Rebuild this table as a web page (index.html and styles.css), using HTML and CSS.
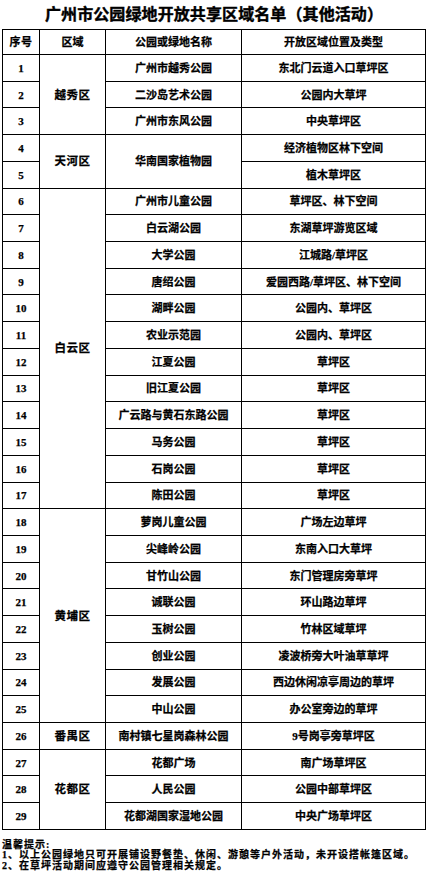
FILE: index.html
```html
<!DOCTYPE html>
<html lang="zh-CN">
<head>
<meta charset="utf-8">
<title>广州市公园绿地开放共享区域名单（其他活动）</title>
<link rel="stylesheet" href="styles.css">
</head>
<body>
<div class="page">
  <h1 class="title">广州市公园绿地开放共享区域名单（其他活动）</h1>
  <table class="list">
    <colgroup>
      <col class="c-no"><col class="c-area"><col class="c-park"><col class="c-zone">
    </colgroup>
    <thead>
      <tr class="head"><th>序号</th><th>区域</th><th>公园或绿地名称</th><th>开放区域位置及类型</th></tr>
    </thead>
    <tbody>
      <tr><td class="no">1</td><td class="area" rowspan="3">越秀区</td><td>广州市越秀公园</td><td>东北门云道入口草坪区</td></tr>
      <tr><td class="no">2</td><td>二沙岛艺术公园</td><td>公园内大草坪</td></tr>
      <tr><td class="no">3</td><td>广州市东风公园</td><td>中央草坪区</td></tr>
      <tr><td class="no">4</td><td class="area" rowspan="2">天河区</td><td rowspan="2">华南国家植物园</td><td>经济植物区林下空间</td></tr>
      <tr><td class="no">5</td><td>植木草坪区</td></tr>
      <tr><td class="no">6</td><td class="area" rowspan="12">白云区</td><td>广州市儿童公园</td><td>草坪区、林下空间</td></tr>
      <tr><td class="no">7</td><td>白云湖公园</td><td>东湖草坪游览区域</td></tr>
      <tr><td class="no">8</td><td>大学公园</td><td>江城路/草坪区</td></tr>
      <tr><td class="no">9</td><td>唐绍公园</td><td>爱园西路/草坪区、林下空间</td></tr>
      <tr><td class="no">10</td><td>湖畔公园</td><td>公园内、草坪区</td></tr>
      <tr><td class="no">11</td><td>农业示范园</td><td>公园内、草坪区</td></tr>
      <tr><td class="no">12</td><td>江夏公园</td><td>草坪区</td></tr>
      <tr><td class="no">13</td><td>旧江夏公园</td><td>草坪区</td></tr>
      <tr><td class="no">14</td><td>广云路与黄石东路公园</td><td>草坪区</td></tr>
      <tr><td class="no">15</td><td>马务公园</td><td>草坪区</td></tr>
      <tr><td class="no">16</td><td>石岗公园</td><td>草坪区</td></tr>
      <tr><td class="no">17</td><td>陈田公园</td><td>草坪区</td></tr>
      <tr><td class="no">18</td><td class="area" rowspan="8">黄埔区</td><td>萝岗儿童公园</td><td>广场左边草坪</td></tr>
      <tr><td class="no">19</td><td>尖峰岭公园</td><td>东南入口大草坪</td></tr>
      <tr><td class="no">20</td><td>甘竹山公园</td><td>东门管理房旁草坪</td></tr>
      <tr><td class="no">21</td><td>诚联公园</td><td>环山路边草坪</td></tr>
      <tr><td class="no">22</td><td>玉树公园</td><td>竹林区域草坪</td></tr>
      <tr><td class="no">23</td><td>创业公园</td><td>凌波桥旁大叶油草草坪</td></tr>
      <tr><td class="no">24</td><td>发展公园</td><td>西边休闲凉亭周边的草坪</td></tr>
      <tr><td class="no">25</td><td>中山公园</td><td>办公室旁边的草坪</td></tr>
      <tr><td class="no">26</td><td class="area">番禺区</td><td>南村镇七星岗森林公园</td><td>9号岗亭旁草坪区</td></tr>
      <tr><td class="no">27</td><td class="area" rowspan="3">花都区</td><td>花都广场</td><td>南广场草坪区</td></tr>
      <tr><td class="no">28</td><td>人民公园</td><td>公园中部草坪区</td></tr>
      <tr><td class="no">29</td><td>花都湖国家湿地公园</td><td>中央广场草坪区</td></tr>
    </tbody>
  </table>
  <div class="notes">
    <p>温馨提示:</p>
    <p>1、以上公园绿地只可开展铺设野餐垫、休闲、游憩等户外活动，未开设搭帐篷区域。</p>
    <p>2、在草坪活动期间应遵守公园管理相关规定。</p>
  </div>
</div>
</body>
</html>
```

FILE: styles.css
```css
html, body {
  margin: 0;
  padding: 0;
  background: #ffffff;
}

body {
  font-family: "Liberation Serif", "Noto Sans CJK SC", serif;
  color: #000000;
  font-weight: 700;
  -webkit-text-stroke: 0.25px #000000;
}

.page {
  width: 428px;
  height: 894px;
  overflow: hidden;
}

.title {
  margin: 0;
  height: 29px;
  line-height: 30px;
  font-size: 16px;
  font-weight: 700;
  text-align: center;
  letter-spacing: 0.1px;
  -webkit-text-stroke: 0.4px #000000;
}

.list {
  margin-left: 2px;
  width: 423px;
  border-collapse: collapse;
  table-layout: fixed;
}

.c-no { width: 37px; }
.c-area { width: 66px; }
.c-park { width: 136px; }
.c-zone { width: 184px; }

.list th,
.list td {
  border: 1px solid #000000;
  padding: 0;
  text-align: center;
  vertical-align: middle;
  font-size: 11px;
  line-height: 12px;
  font-weight: 700;
  white-space: nowrap;
}

.list .head {
  height: 25px;
}

.list tbody tr {
  height: 26.72px;
}

.list th:first-child {
  letter-spacing: 0.5px;
}

.list .no {
  font-size: 11px;
}

.list .area {
  font-size: 11.5px;
  letter-spacing: 0.5px;
}

.notes {
  margin: 10px 0 0 2px;
  font-size: 10px;
  letter-spacing: 1px;
  line-height: 10.5px;
}

.notes p {
  margin: 0;
  white-space: nowrap;
}
```
